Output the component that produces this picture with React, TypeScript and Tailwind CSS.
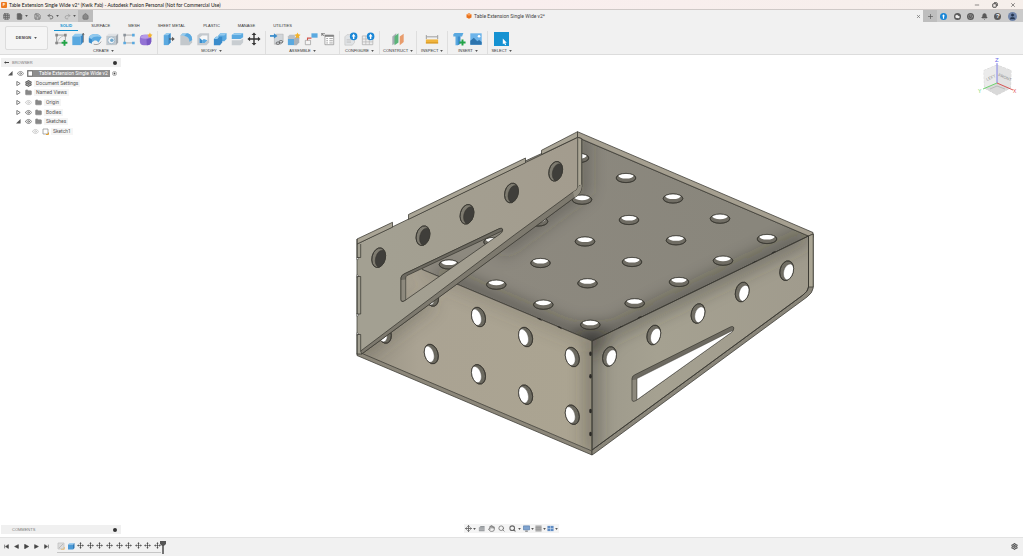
import React from "react";
import {
  Bell,
  Cloud,
  Clock,
  Eye,
  Folder,
  Grid3x3,
  Hand,
  House,
  Minus,
  Move,
  Plus,
  Redo2,
  Save,
  Search,
  Settings,
  Undo2,
  User,
  X,
  File as FileIcon,
} from "lucide-react";

type P = { x: number; y: number };
const pt = (x: number, y: number): P => ({ x, y });

/* ---------- ribbon icons, drawn on a 16 x 16 grid ---------- */

const blue = "#5aa9e0";
const lightBlue = "#93caee";
const deepBlue = "#3a8ccb";
const grey = "#8b939b";

const glyphs: Record<string, React.ReactNode> = {
  sketch: (
    <>
      <path d="M3 2.5V14M1.5 12.5H9M3 3.5H13V9" fill="none" stroke="#888" strokeWidth=".9" />
      <path d="M4 12Q5 6 12 4" fill="none" stroke="#aaa" strokeWidth=".8" />
      <path d="M1.5 2h3v3h-3zM11.5 2h3v3h-3zM1.5 11h3v3h-3z" fill="#888" />
      <path d="M12 9v6.6M8.7 12.3h6.6" stroke="#22a447" strokeWidth="2.2" />
    </>
  ),
  box: (
    <>
      <path d="M1.5 5 4.5 2H14L11 5z" fill={lightBlue} />
      <path d="M1.5 5H11V15H1.5z" fill={blue} />
      <path d="M11 5 14 2V11.5L11 15z" fill={deepBlue} />
      <path d="M14 12V1.5M13 3.500l1-2 1 2" stroke="#555" strokeWidth=".8" fill="none" />
    </>
  ),
  revolve: (
    <>
      <path d="M1 6C4 1 12 1 15.5 6L12 12C10 9 7 9 5 11.5L1 11z" fill={blue} />
      <path d="M1 6C4 1 12 1 15.5 6 11 4.5 6 5 4 8z" fill={lightBlue} />
      <path d="M1 7 4.500 8.500V13.500L1 12z" fill={deepBlue} />
      <path d="M6.500 14C10 15 13.500 14 15 11" fill="none" stroke="#999" />
    </>
  ),
  hole: (
    <>
      <path d="M1.500 4.500 4 2H15L12.500 4.500z" fill="#dfe2e5" />
      <path d="M1.500 4.500h11V15h-11z" fill="#c3c8cc" />
      <path d="M12.500 4.500 15 2V12L12.500 15z" fill="#a1a8af" />
      <circle cx="7.200" cy="9.500" r="4" fill="#f1f3f5" stroke="#9bb6c9" />
      <circle cx="7.800" cy="9.500" r="2" fill="#6fa9cf" />
    </>
  ),
  pattern: (
    <>
      <path d="M3 3.500H13M3 3.500V12.500H13" fill="none" stroke="#999" strokeWidth=".9" />
      <path d="M1.500 2h3v3h-3z" fill={grey} />
      <path d="M11.500 2h3v3h-3zM1.500 11h3v3h-3zM11.500 11h3v3h-3z" fill={blue} />
    </>
  ),
  form: (
    <>
      <rect x="1" y="3" width="13" height="12" rx="4.500" fill="#9272d4" />
      <path d="M1.500 6.500Q3 3 7 3H10Q13 3.500 13.500 6 8 9 1.500 6.500z" fill="#b79be8" />
      <path d="M8.500 8.500 14 6.500V11Q13 15 9 15z" fill="#7a58c2" />
      <path d="m12.500.5.9 2 2.100.5-1.600 1.500.4 2.200-1.800-1.100-1.900 1.100.4-2.200L9.500 3l2.100-.5z" fill="#f3b229" />
    </>
  ),
  press: (
    <>
      <path d="M2 3.500 5 1h5L7 3.500z" fill={lightBlue} />
      <path d="M2 3.500H7V15H2z" fill={blue} />
      <path d="M7 3.500 10 1V12L7 15z" fill={deepBlue} />
      <path d="M8 8h4" stroke="#555" strokeWidth="1.200" />
      <path d="M11.500 5.500 14.500 8 11.500 10.500z" fill="#555" />
    </>
  ),
  fillet: (
    <>
      <path d="M1.500 4 4 1.500H9C13 2 15 5 15 9V12L12 15H1.500z" fill="#c3c8cc" />
      <path d="M4 1.500H9C13 2 15 5 15 9L12 11C12 7 8 4 1.500 4z" fill={lightBlue} />
      <path d="M9 1.500C13 2 15 5 15 9L12 11C12 7 10 5 6 4.300z" fill={blue} />
    </>
  ),
  shell: (
    <>
      <path d="M1.500 4 4.500 1.500H15V12L12 15H1.500z" fill="#c4c9ce" />
      <path d="M4 6.500 7 4H13V9.500L10 12.500H4z" fill="#f7f8f9" />
      <path d="M4 6.500 7 9.500V12.500H4z" fill={deepBlue} />
      <path d="M7 9.500 9 8 13 9.500 10 12.500H7z" fill={blue} />
    </>
  ),
  combine: (
    <>
      <path d="M6 4 8.500 1.500H15.500V8L13 10.500H6z" fill={blue} />
      <path d="M1 8 3.500 5.500H10.500V12L8 15H1z" fill={deepBlue} />
      <path d="M6 4 8.500 1.500H15.500L13 4zM1 8 3.500 5.500H7L5 8z" fill={lightBlue} />
    </>
  ),
  split: (
    <>
      <path d="M2 3.500 5 1.500H15V6L12 8H2z" fill={blue} />
      <path d="M2 3.500 5 1.500H15L12 3.500z" fill={lightBlue} />
      <path d="M2 9.500H12L15 7.500V12L12 15H2z" fill="#c8cdd1" />
    </>
  ),
  move: (
    <path
      d="M8 .5 10.700 3.500H8.800V7.200H12.500V5.300L15.500 8 12.500 10.700V8.800H8.800V12.500H10.700L8 15.500 5.300 12.500H7.200V8.800H3.500V10.700L.5 8 3.500 5.300V7.200H7.200V3.500H5.300z"
      fill="#333"
    />
  ),
  component: (
    <>
      <path d="M5 4.500 7 2.500h8V11l-2.500 3H5z" fill="#d1d5d9" stroke="#aaa" strokeWidth=".6" />
      <path d="M0 4.500H5" stroke={deepBlue} strokeWidth="2" />
      <path d="M4.500 1.500 8.500 4.500 4.500 7.500z" fill={deepBlue} />
      <rect x="7" y="11.500" width="4" height="2.600" rx="1.300" fill="none" stroke="#555" strokeWidth=".9" />
      <rect x="10.500" y="9.800" width="4" height="2.600" rx="1.300" fill="none" stroke="#555" strokeWidth=".9" />
    </>
  ),
  assemblyNew: (
    <>
      <path d="M1 8H8V15H1z" fill={blue} />
      <path d="M1 8V5L3 3H9V8z" fill="#b9bfc5" />
      <path d="M8 8 10 5.500H14V12L11 15H8z" fill="#aab1b8" />
      <path d="m12 .5 1 2.200 2.500.5-1.800 1.700.4 2.500L12 6.200 9.900 7.400l.4-2.500L8.500 3.200 11 2.700z" fill="#f3b229" />
    </>
  ),
  joint: (
    <>
      <path d="M8.500 1.500h7v5h-7z" fill={blue} />
      <path d="M1.500 9.500h6v5h-6z" fill="#f4f4f4" stroke="#999" strokeWidth=".8" />
      <path d="M4 9.500V7H8.500" fill="none" stroke="#d0534a" strokeWidth="1.200" />
    </>
  ),
  table: (
    <>
      <path d="M4.500 3.500H14.500V14.500H4.500z" fill="#fff" stroke="#888" strokeWidth=".8" />
      <path d="M4.500 4.500H14.500" stroke="#777" strokeWidth="1.800" />
      <path d="M6 7.500h2M9.500 7.500h4M6 10h2M9.500 10h4M6 12.500h2M9.500 12.500h4" stroke="#999" strokeWidth="1" />
      <path d="M.5 2H4.500M1 1.500V4.500M1 2l2.500 2.500" stroke="#666" strokeWidth=".9" />
    </>
  ),
  config: (
    <>
      <path d="M1 5.500 3.500 3H12V12L9.500 15H1z" fill="#e0e3e6" stroke="#bbb" strokeWidth=".6" />
      <path d="M3 9h5M3 11.500h5" stroke="#bbb" />
      <circle cx="11" cy="5" r="4.300" fill="#1b87d6" />
      <path d="M11 2 13.200 5H11.800V8H10.200V5H8.800z" fill="#fff" />
    </>
  ),
  configTable: (
    <>
      <path d="M1.500 4.500H13.500V14.500H1.500z" fill="#eee" stroke="#aaa" strokeWidth=".8" />
      <path d="M1.500 8H13.500M1.500 11.300H13.500M5.500 4.500V14.500M9.500 4.500V14.500" stroke="#b5b5b5" strokeWidth=".8" />
      <circle cx="11" cy="5" r="4.300" fill="#1b87d6" />
      <path d="M11 2 13.200 5H11.800V8H10.200V5H8.800z" fill="#fff" />
    </>
  ),
  plane: (
    <>
      <path d="M1.500 5 6 1.500V12L1.500 15z" fill="#a6adb3" />
      <path d="M4 5 8.500 1.500V12L4 15z" fill="#5bb47a" />
      <path d="M10 5 14.500 2V11.500L10 15z" fill="#e89c6c" />
    </>
  ),
  measure: (
    <>
      <path d="M1.500 3.500V8M14.500 3.500V8M2 5.500H14" stroke="#888" strokeWidth=".9" />
      <path d="M1 8.500H15V13H1z" fill="#f0b43c" />
      <path d="M1 12H15V13H1z" fill="#cc8c1c" />
    </>
  ),
  insert: (
    <>
      <path d="M1.500 2.500 3 1H13L11.500 5H9.500V13.500L6.500 15H4V5H1.500z" fill={blue} />
      <path d="M6.500 5H9.500V13.500L6.500 15z" fill={deepBlue} />
      <path d="M12 8.500v7M8.500 12h7" stroke="#22a447" strokeWidth="2.200" />
    </>
  ),
  picture: (
    <>
      <path d="M1.500 1.500h13v13h-13z" fill="#6db4ea" />
      <path d="M1.500 14.500V10L5.500 6.500 9.500 10.500 11.500 9 14.500 11.500V14.500z" fill="#2d74ae" />
      <circle cx="11.500" cy="4.800" r="1.500" fill="#fff" />
    </>
  ),
  select: (
    <>
      <path d="M0 0h16v16H0z" fill="#1592d2" />
      <path d="M9.500 7.500V14L11 12.800 12.200 15.200 13.300 14.700 12.200 12.400H14z" fill="#fff" />
    </>
  ),
};

function Glyph({ name }: { name: string }) {
  return (
    <svg viewBox="0 0 16 16" className="h-[14px] w-full" aria-hidden="true">
      {glyphs[name]}
    </svg>
  );
}

const groups = [
  { label: "CREATE", pad: "px-1", icons: ["sketch", "box", "revolve", "hole", "pattern", "form"] },
  { label: "MODIFY", pad: "px-1", icons: ["press", "fillet", "shell", "combine", "split", "move"] },
  { label: "ASSEMBLE", pad: "px-1", icons: ["component", "assemblyNew", "joint", "table"] },
  { label: "CONFIGURE", pad: "px-1", icons: ["config", "configTable"] },
  { label: "CONSTRUCT", pad: "px-[3px]", icons: ["plane"] },
  { label: "INSPECT", pad: "px-1", icons: ["measure"] },
  { label: "INSERT", pad: "px-1", icons: ["insert", "picture"] },
  { label: "SELECT", pad: "px-[3px]", icons: ["select"] },
];

const tabs = ["SOLID", "SURFACE", "MESH", "SHEET METAL", "PLASTIC", "MANAGE", "UTILITIES"];

function Caret() {
  return (
    <svg viewBox="0 0 4 3" className="h-[2px] w-[3px] shrink-0" aria-hidden="true">
      <path d="M0 0h4L2 3z" fill="#555" />
    </svg>
  );
}

function TitleBar() {
  return (
    <header className="flex h-[10px] shrink-0 items-center border-b border-[#cfc9c7] bg-gradient-to-r from-[#f8f1ea] via-[#f9eeee] to-[#f6efeb] pl-px pr-[7px]">
      <span className="flex h-[6px] w-[6px] items-center justify-center rounded-[1px] bg-[#ee7a1f] text-[4px] font-bold text-white">
        F
      </span>
      <h1 className="ml-[2px] whitespace-nowrap font-['Lato',sans-serif] text-[5px] leading-[8px] text-[#111]">
        Table Extension Single Wide v2* (Kwik Fab) - Autodesk Fusion Personal (Not for Commercial Use)
      </h1>
      <div className="ml-auto flex items-center gap-[12px] text-[#222]">
        <button aria-label="Minimize"><Minus size={6} /></button>
        <button aria-label="Restore">
          <svg viewBox="0 0 12 12" className="h-[6px] w-[6px]" fill="none" stroke="#222" strokeWidth="1.600">
            <rect x="1.500" y="3.500" width="7" height="7" rx="1" />
            <path d="M4 1.500h5a1.500 1.500 0 0 1 1.500 1.500v5" />
          </svg>
        </button>
        <button aria-label="Close"><X size={6} /></button>
      </div>
    </header>
  );
}

function DocumentBar() {
  return (
    <div className="flex h-[12px] shrink-0 items-stretch bg-[#f1f1f1] text-[#666]">
      <div className="flex w-[78px] items-center bg-[#d0d0d0] pl-[3px]">
        <button aria-label="Data panel"><Grid3x3 size={7} strokeWidth={3} /></button>
        <button aria-label="File" className="ml-[6px] flex items-center gap-[2px]">
          <FileIcon size={7} fill="#666" /><Caret />
        </button>
        <button aria-label="Save" className="ml-[6px]"><Save size={7} strokeWidth={2.5} /></button>
        <button aria-label="Undo" className="ml-[6px] flex items-center gap-[2px]">
          <Undo2 size={7} strokeWidth={3} /><Caret />
        </button>
        <button aria-label="Redo" className="ml-[5px] flex items-center gap-[2px] text-[#999]">
          <Redo2 size={7} strokeWidth={2.5} /><Caret />
        </button>
      </div>
      <button aria-label="Home" className="flex w-[15px] items-center justify-center bg-[#bcbcbc]">
        <House size={7} fill="#888" />
      </button>
      <div className="flex flex-1 items-center pr-[2px]">
        <div className="flex flex-1 items-center justify-center gap-[2px] pl-[2px]">
          <svg viewBox="0 0 12 12" className="h-[6px] w-[6px]" aria-hidden="true">
            <path d="M6 .5 11 3V9L6 11.500 1 9V3z" fill="#e9711c" />
            <path d="M6 .5 11 3 6 5.500 1 3z" fill="#f9a35c" />
          </svg>
          <span className="whitespace-nowrap font-['Roboto',sans-serif] text-[5px] leading-[8px] text-[#444]">
            Table Extension Single Wide v2*
          </span>
        </div>
        <button aria-label="Close document"><X size={5} strokeWidth={3} /></button>
      </div>
      <div className="flex w-[100px] items-center bg-[#cbcbcb] text-[#5a5a5a]">
        <button aria-label="New document" className="flex h-full w-[14px] items-center justify-center bg-[#bebebe]">
          <Plus size={7} strokeWidth={2.5} />
        </button>
        <div className="flex flex-1 items-center justify-between pl-[3px] pr-[6px]">
          <button aria-label="Extensions">
            <svg viewBox="0 0 12 12" className="h-[7px] w-[7px]">
              <circle cx="6" cy="6" r="6" fill="#1b87d6" />
              <path d="M6 2 8.500 5.500H7V10H5V5.500H3.500z" fill="#fff" />
            </svg>
          </button>
          <button aria-label="Cloud status" className="rounded-full bg-[#5a5a5a] p-px"><Cloud size={5} color="#eee" fill="#eee" strokeWidth={1} /></button>
          <button aria-label="Job status" className="rounded-full bg-[#5a5a5a] p-px"><Clock size={5} color="#999" strokeWidth={3} /></button>
          <button aria-label="Notifications"><Bell size={7} fill="#5a5a5a" /></button>
          <button aria-label="Help" className="flex h-[7px] w-[7px] items-center justify-center rounded-full bg-[#5a5a5a] text-[6px] font-bold leading-[7px] text-white">
            ?
          </button>
          <button aria-label="Account" className="flex h-[9px] w-[9px] items-center justify-center rounded-full bg-[#7186ab]">
            <User size={7} color="#25364f" fill="#25364f" />
          </button>
        </div>
      </div>
    </div>
  );
}

function Ribbon() {
  return (
    <div className="flex h-[33px] shrink-0 border-b border-[#dcdcdc] bg-[#f1f1f1]">
      <button className="ml-[5px] mt-[4px] flex h-[24px] w-[43px] items-center justify-center gap-[3px] rounded-[2px] border border-[#dcdcdc] bg-[#f5f5f5] text-[4px] font-bold leading-[6px] text-[#444]">
        DESIGN <Caret />
      </button>
      <div className="ml-[2px] flex flex-col">
        <nav className="ml-[4px] flex h-[9px] items-stretch gap-[6px]">
          {tabs.map((t, i) => (
            <button
              key={t}
              className={
                i === 0
                  ? "mr-px border-b border-[#1592d2] px-[6px] text-[4px] font-bold leading-[8px] text-[#1592d2]"
                  : "border-b border-transparent px-[6px] text-[4px] leading-[8px] text-[#333]"
              }
            >
              {t}
            </button>
          ))}
        </nav>
        <div className="flex">
          {groups.map((g, i) => (
            <div key={g.label} className={i < groups.length - 1 ? "border-r border-[#dedede]" : ""}>
              <div className={"flex flex-col items-center pt-px " + g.pad}>
                <div className="flex gap-[3px]">
                  {g.icons.map((n) => (
                    <button key={n} aria-label={n} className={n === "select" ? "w-[15px] bg-[#1592d2]" : "w-[14px]"}>
                      <Glyph name={n} />
                    </button>
                  ))}
                </div>
                <button className="mt-px flex items-center gap-[2px] text-[4px] leading-[7px] text-[#333]">
                  {g.label} <Caret />
                </button>
              </div>
            </div>
          ))}
        </div>
      </div>
    </div>
  );
}

/* ---------- browser tree ---------- */

type Node = { label: string; indent: string; open?: boolean; leaf?: boolean; eye?: "on" | "off"; icon: "gear" | "folder" | "sketch" };

const nodes: Node[] = [
  { label: "Document Settings", indent: "pl-[15px]", icon: "gear" },
  { label: "Named Views", indent: "pl-[15px]", icon: "folder" },
  { label: "Origin", indent: "pl-[15px]", eye: "off", icon: "folder" },
  { label: "Bodies", indent: "pl-[15px]", eye: "on", icon: "folder" },
  { label: "Sketches", indent: "pl-[15px]", open: true, eye: "on", icon: "folder" },
  { label: "Sketch1", indent: "pl-[31px]", leaf: true, eye: "off", icon: "sketch" },
];

function Twisty({ open }: { open?: boolean }) {
  return (
    <svg viewBox="0 0 6 6" className="h-[5px] w-[5px] shrink-0" aria-hidden="true">
      {open ? <path d="M5.500 0V5.500H0z" fill="#555" /> : <path d="M1 .5 5 3 1 5.500z" fill="#fff" stroke="#555" strokeWidth=".9" />}
    </svg>
  );
}

function BrowserPanel() {
  return (
    <aside className="absolute left-px top-[3px] w-[120px]">
      <div className="flex h-[9px] items-center bg-[#f0f0f0] pl-[3px] pr-[4px] text-[4px] leading-[8px] text-[#777]">
        <svg viewBox="0 0 8 4" className="h-[3px] w-[5px]"><path d="M0 2 3 0V1.200H8V2.800H3V4z" fill="#444" /></svg>
        <span className="ml-[3px]">BROWSER</span>
        <button aria-label="Panel options" className="ml-auto h-[4px] w-[4px] rounded-full bg-[#333]" />
      </div>
      <ul className="mt-[2px] grid h-[67px] auto-rows-fr font-['Roboto',sans-serif] text-[5px] leading-[7px] text-[#555]">
        <li className="flex items-center pl-[7px]">
          <Twisty open />
          <Eye size={7} className="ml-[4px] text-[#777]" strokeWidth={2.500} />
          <span className="ml-[3px] flex h-[7px] w-[83px] items-center bg-[#8d8d8d] text-white">
            <svg viewBox="0 0 7 7" className="h-[7px] w-[7px]"><path d="M1 1h4.500v5H1z" fill="#fff" stroke="#666" strokeWidth=".7" /></svg>
            <span className="ml-[5px] whitespace-nowrap">Table Extension Single Wide v2</span>
          </span>
          <svg viewBox="0 0 6 6" className="ml-[2px] h-[5px] w-[5px]">
            <circle cx="3" cy="3" r="2.500" fill="#fff" stroke="#666" strokeWidth=".6" />
            <circle cx="3" cy="3" r="1.100" fill="#444" />
          </svg>
        </li>
        {nodes.map((n) => (
          <li key={n.label} className={"flex items-center " + n.indent}>
            {!n.leaf && <span className="mr-[4px] flex"><Twisty open={n.open} /></span>}
            {n.eye && <Eye size={7} strokeWidth={2.500} className={n.eye === "on" ? "mr-[3px] text-[#666]" : "mr-[3px] text-[#c0c0c0]"} />}
            {n.icon === "gear" && <Settings size={7} strokeWidth={4} className="text-[#666]" />}
            {n.icon === "folder" && <Folder size={7} fill="#888" className="text-[#888]" />}
            {n.icon === "sketch" && (
              <svg viewBox="0 0 7 7" className="h-[7px] w-[7px]">
                <path d="M1 1h5v5H1z" fill="#fff" stroke="#888" strokeWidth=".7" />
                <path d="M4 6.500h2.500V4.500" stroke="#e0a030" fill="none" />
              </svg>
            )}
            <span className="ml-[2px] bg-[#f5f5f5] px-[2px]">{n.label}</span>
          </li>
        ))}
      </ul>
    </aside>
  );
}

/* ---------- model ---------- */

const bedHoles: P[] = [
  pt(579, 158), pt(626, 178), pt(673, 198.500), pt(720, 218.700), pt(767, 239),
  pt(582, 199.700), pt(629, 220), pt(676, 240.300), pt(723, 260.700),
  pt(538, 221.500), pt(585, 241.500), pt(632, 262), pt(679, 282),
  pt(493.500, 242), pt(540.500, 263), pt(587.500, 283.300), pt(634.700, 303.300),
  pt(449, 264.500), pt(496.300, 284.700), pt(543.300, 304.700), pt(590.300, 324.800),
];
const frontHoles: P[] = [
  pt(431.500, 296.500), pt(478.500, 317), pt(525.600, 337), pt(572.300, 357),
  pt(384.300, 333.500), pt(431.300, 354), pt(478.500, 374.300), pt(525.600, 394.700), pt(572.300, 414.700),
];
const leftHoles: P[] = [pt(378.700, 257.700), pt(423, 235.700), pt(467, 214.300), pt(511.500, 193), pt(555.700, 171.300)];
const rightHoles: P[] = [pt(609.500, 356.500), pt(653.800, 335), pt(698, 313.500), pt(742.200, 292), pt(786.700, 270.700)];

const leftFace =
  "M357 244 577.700 137.300 581.700 138.500V186.500Q581 194 574.500 197.500L523.300 235 361.700 354 357 354Z";
const leftSlot = "M401 278Q401 275.500 404 274L498.500 229Q502.500 227.300 502.700 230Q502.800 232 500.500 233.700L405 300.500Q401 303 401 299.500Z";
const rightSlot = "M632 378.500Q632 376 635 374.700L730 327.200Q733.300 325.500 733.800 328Q734 330.500 731.500 332.200L636 400.500Q632 402.500 632 399.500Z";

function Model() {
  return (
    <svg
      viewBox="0 55 1023 482"
      className="absolute inset-0 h-full w-full"
      role="img"
      aria-label="Table extension model"
      fill="none"
      stroke="#3a3832"
      strokeWidth=".75"
      strokeLinejoin="round"
    >
      <defs>
        <linearGradient id="bed" gradientUnits="userSpaceOnUse" x1="500" y1="280" x2="740" y2="200">
          <stop offset="0" stopColor="#8d897f" />
          <stop offset="1" stopColor="#89867c" />
        </linearGradient>
        <linearGradient id="front" gradientUnits="userSpaceOnUse" x1="360" y1="0" x2="592" y2="0">
          <stop offset="0" stopColor="#979183" />
          <stop offset=".25" stopColor="#aaa393" />
          <stop offset="1" stopColor="#aba491" />
        </linearGradient>
        <linearGradient id="left" gradientUnits="userSpaceOnUse" x1="380" y1="230" x2="580" y2="200">
          <stop offset="0" stopColor="#a3a092" />
          <stop offset="1" stopColor="#a39c8e" />
        </linearGradient>
        <linearGradient id="right" gradientUnits="userSpaceOnUse" x1="592" y1="0" x2="809" y2="0">
          <stop offset="0" stopColor="#9d998b" />
          <stop offset=".3" stopColor="#a5a191" />
          <stop offset="1" stopColor="#a09b8d" />
        </linearGradient>
        <filter id="soft" filterUnits="userSpaceOnUse" x="340" y="100" width="500" height="380">
          <feGaussianBlur stdDeviation="9" />
        </filter>
        <clipPath id="bedClip"><path d="M577 137.300 808.500 236 592 341 421.700 269.300 440 200z" /></clipPath>
        <clipPath id="frontClip"><path d="M361 353.500 395 250 421.700 269.300 592 341V451z" /></clipPath>
        <clipPath id="rightClip"><path d="M592 341 808.500 236V287Q808 292 803 295L592 450z" /></clipPath>
        <clipPath id="flatHole"><ellipse rx="9.800" ry="4.600" /></clipPath>
        <clipPath id="tallHole"><ellipse rx="6.700" ry="10" /></clipPath>
      </defs>

      {/* bed */}
      <path d="M577 137.300 808.500 236 592 341 421.700 269.300 440 200z" fill="url(#bed)" />
      <g clipPath="url(#bedClip)" stroke="none">
        <g filter="url(#soft)">
          <path d="M440 275 592 341 808 236" stroke="#24231f" strokeWidth="9" opacity=".65" />
          <circle cx="592" cy="344" r="18" fill="#1e1d1a" opacity=".6" />
          <path d="M582 132V190L500 250" stroke="#2e2d29" strokeWidth="9" opacity=".55" />
        </g>
      </g>
      {bedHoles.map((h) => (
        <g key={h.x + "-" + h.y} transform={`translate(${h.x} ${h.y})`}>
          <ellipse rx="9.800" ry="4.600" fill="#706d64" />
          <g clipPath="url(#flatHole)">
            <ellipse cy="-2.400" rx="7.800" ry="2.900" fill="#fff" stroke="none" />
          </g>
          <ellipse rx="9.800" ry="4.600" />
        </g>
      ))}

      {/* rear rim */}
      <path d="M577.500 131.700 813 232.500V237.500L808.500 236 577.500 137.300z" fill="#a59f90" />

      {/* front panel */}
      <path d="M361 353.500 395 250 421.700 269.300 592 341V451z" fill="url(#front)" stroke="none" />
      <g clipPath="url(#frontClip)" stroke="none">
        <g filter="url(#soft)">
          <path d="M593 335V455" stroke="#3b3931" strokeWidth="9" opacity=".65" />
          <path d="M421 268 592 339" stroke="#57544a" strokeWidth="7" opacity=".5" />
          <path d="M357 354 430 300" stroke="#4c493f" strokeWidth="12" opacity=".45" />
        </g>
      </g>
      <path d="M421.700 269.300 592 341" />
      {frontHoles.map((h) => (
        <g key={h.x + "-" + h.y} transform={`translate(${h.x} ${h.y}) rotate(-17)`}>
          <ellipse rx="6.700" ry="10" fill="#6b695f" />
          <g clipPath="url(#tallHole)">
            <ellipse cx="-2.600" cy="-.5" rx="5.200" ry="8.400" fill="#fff" stroke="#55534d" strokeWidth=".4" />
          </g>
          <ellipse rx="6.700" ry="10" />
        </g>
      ))}
      <path d="M357 353.500 361.700 353.300 592 451V455L357 355.500z" fill="#8c877a" />

      {/* left panel */}
      <path fillRule="evenodd" d={leftFace + leftSlot} fill="url(#left)" />
      <path
        d="M357 239 392.500 222.300V227.200L357 244zM408.500 214.500 525.500 158V162.800L408.500 219.300zM541.500 150.300 577.500 131.700V137.300L541.500 154.500z"
        fill="#aaa596"
      />
      <path d="M577.700 137.300 581.700 138.700V186.500L577.700 187.500z" fill="#aaa594" />
      <path
        d="M577.700 187.500Q577.500 190 573 192L514.300 235 360.700 351 361.700 354 523.300 235.500 574.500 197.500Q581 194 581.700 186.500L580 185z"
        fill="#7d796e"
      />
      <path d="M577.700 187.500 578 186.500 581.700 184.500V187Q581 194 574.500 197.500L573 192Q577.500 190 577.700 187.500z" fill="#949083" stroke="none" />
      <path d="M357 257 359 258.500 357 260zM357 274.500 359 276 357 277.500zM357 313 359 315 357 316.500zM357 332.500 359 334 357 335.500z" fill="#fff" stroke="#3a3832" strokeWidth=".5" />
      <path d="M357 239V257.500M357 276.500V314M357 334.500V354.500M360.700 244V257.500H357M360.700 276.500V314H357M360.700 334.500V351M357 276.500H360.700M357 334.500H360.700" />
      <path
        d="M401 278Q401 275.500 404 274L498.500 229Q502.500 227.300 502.700 230 502.500 231 500.500 231.700L407 275.500Q405.700 276.500 405.700 278V299.800Q401 303 401 299.500z"
        fill="#6d6a61"
      />
      <path d="M401.500 280V299.500Q401.500 302 405.300 299.800V279.500z" fill="#8d897d" stroke="none" />
      {leftHoles.map((h) => (
        <g key={h.x} transform={`translate(${h.x} ${h.y}) rotate(14)`}>
          <ellipse rx="6.700" ry="10" fill="#7e7b70" />
          <g clipPath="url(#tallHole)">
            <ellipse cx="2.600" cy=".5" rx="5.600" ry="8.800" fill="#3f3e3a" strokeWidth=".5" />
          </g>
          <ellipse rx="6.700" ry="10" />
        </g>
      ))}

      {/* right panel */}
      <path d="M808.500 236 813.200 234V288Q812.500 293 807 297L595 453 592 455V450L803 295Q808.500 291 808.500 287z" fill="#8a867a" />
      <path d="M808.500 236 813.200 234V287L808.500 287z" fill="#aaa594" />
      <path d="M592 341 808.500 236V287Q808 291.500 803 295L592 450z" fill="url(#right)" />
      <g clipPath="url(#rightClip)" stroke="none">
        <g filter="url(#soft)">
          <path d="M591 455V341L808 235" stroke="#33322c" strokeWidth="9" opacity=".7" />
          <circle cx="592" cy="341" r="14" fill="#33322c" opacity=".55" />
        </g>
      </g>
      <path d="M592 341 808.500 236V287Q808 291.500 803 295L592 450z" />
      {rightHoles.map((h) => (
        <g key={h.x} transform={`translate(${h.x} ${h.y}) rotate(14)`}>
          <ellipse rx="6.700" ry="10" fill="#716e64" />
          <g clipPath="url(#tallHole)">
            <ellipse cx="2.400" cy=".8" rx="5.200" ry="8.200" fill="#fff" stroke="#45433e" strokeWidth=".4" />
          </g>
          <ellipse rx="6.700" ry="10" />
        </g>
      ))}
      <path d={rightSlot} fill="#6d6a61" />
      <path d="M632.500 380V399.500Q632.500 402 636.500 399.800V379.500z" fill="#8d897d" stroke="none" />
      <path d="M637 378.500 732.500 330.500 732 332 637 399.800z" fill="#fff" strokeWidth=".5" />

      {/* joint notches */}
      <g fill="#2b2a26" stroke="none">
        {[353.700, 376.300, 411, 434].map((y) => (
          <ellipse key={y} cx="590.500" cy={y} rx="1.300" ry="2.300" />
        ))}
        <path d="M618 328.500q2-3 5-2.500zM637 319q2-3.500 5-2.500zM752 263.500q2-3 5-2.500zM771 254q2-3.500 5-2.500zM537 318.500q3-2 5 2.500zM557 326.800q3-2 5 2.500z" />
      </g>
    </svg>
  );
}

function ViewCube() {
  return (
    <svg viewBox="0 0 44 44" className="absolute right-[3px] top-0 h-[44px] w-[44px]" role="img" aria-label="View cube" fontFamily="Liberation Sans, sans-serif">
      <path d="M21 10 8 15.500 8.500 33 21 40 34.500 33 35 15.500z" fill="#e6e6e6" stroke="#bbb" strokeWidth=".6" strokeDasharray="3 1" />
      <path d="M21 10 8 15.500 8.500 33 21 28z" fill="#ebebeb" />
      <path d="M21 10 35 15.500 34.500 33 21 28z" fill="#e2e2e2" />
      <path d="M21 28 8.500 33 21 40 34.500 33z" fill="#d9d9d9" />
      <text x="11" y="26" fontSize="4" fill="#888" transform="rotate(-24 11 26)">LEFT</text>
      <text x="22" y="21" fontSize="4" fill="#888" transform="rotate(22 22 21)">FRONT</text>
      <path d="M14 34 21 31 29 34" stroke="#bbb" strokeWidth="1" fill="none" />
      <path d="M21 28V8" stroke="#7777e8" strokeWidth=".9" />
      <path d="M21 28 7 34" stroke="#63d463" strokeWidth=".9" />
      <path d="M21 28 37 35" stroke="#d64545" strokeWidth=".9" />
      <text x="19" y="7" fontSize="6" fill="#6c6ce8">Z</text>
      <text x="37" y="38" fontSize="5" fill="#e05050">X</text>
      <text x="2" y="38" fontSize="5" fill="#63d463">Y</text>
    </svg>
  );
}

function NavBar() {
  return (
    <div className="absolute inset-x-0 bottom-[4px] flex justify-center">
      <div className="flex h-[9px] items-center bg-[#f4f4f4] px-px text-[#666]">
        <button aria-label="Orbit" className="flex items-center gap-px"><Move size={7} strokeWidth={3} /><Caret /></button>
        <button aria-label="Look at" className="ml-[2px]">
          <svg viewBox="0 0 8 8" className="h-[7px] w-[7px]"><path d="M1 3 3 1H7.500V7H1z" fill="#92969a" /><path d="M1 3.500H7.500M1 5.500H7.500" stroke="#ddd" strokeWidth=".6" /></svg>
        </button>
        <button aria-label="Pan" className="ml-[3px]"><Hand size={7} strokeWidth={2.500} /></button>
        <button aria-label="Zoom" className="ml-[3px]"><Search size={7} strokeWidth={2.500} /></button>
        <button aria-label="Zoom window" className="ml-[4px] flex items-center gap-[2px]"><Search size={7} strokeWidth={3.500} /><Caret /></button>
        <button aria-label="Display settings" className="ml-[2px] flex items-center gap-px">
          <svg viewBox="0 0 8 8" className="h-[7px] w-[7px]"><path d="M.5 1h7v4.500h-7z" fill="#7fa3cf" stroke="#5a7fae" strokeWidth=".8" /><path d="M2.500 7h3" stroke="#555" /></svg><Caret />
        </button>
        <button aria-label="Grid" className="ml-px flex items-center gap-px">
          <svg viewBox="0 0 8 8" className="h-[7px] w-[7px]"><path d="M.5.5h7v7h-7z" fill="#aaa" /><path d="M.5 3h7M.5 5h7" stroke="#888" strokeWidth=".5" /></svg><Caret />
        </button>
        <button aria-label="Viewports" className="ml-px flex items-center gap-px">
          <svg viewBox="0 0 8 8" className="h-[7px] w-[7px]"><path d="M.5 1h7v6h-7z" fill="#5f8cc4" /><path d="M4 1v6M.5 4h7" stroke="#dce8f5" strokeWidth=".6" /></svg><Caret />
        </button>
      </div>
    </div>
  );
}

function Timeline() {
  const play = [
    ["Go to start", "M1 1V7M7 1 2.500 4 7 7z"],
    ["Step back", "M7 1 1 4 7 7z"],
    ["Play", "M1 .5 7.500 4 1 7.500z"],
    ["Step forward", "M1 1 7 4 1 7z"],
    ["Go to end", "M7 1V7M1 1 5.500 4 1 7z"],
  ];
  return (
    <footer className="flex h-[19px] shrink-0 items-center border-t border-[#e2e2e2] bg-[#f1f1f1] pl-[4px] pr-[5px]">
      <div className="flex gap-[5px] pb-[2px]">
        {play.map(([label, d]) => (
          <button key={label} aria-label={label} className="flex">
            <svg viewBox="0 0 8 8" className="h-[5px] w-[5px]"><path d={d} fill="#444" stroke="#444" strokeWidth="1" /></svg>
          </button>
        ))}
      </div>
      <div className="ml-[8px] flex h-[13px] items-start">
        <div className="flex h-[12px] items-center gap-[2px] border-b border-[#c6c6c6] pb-px">
          <button aria-label="Sketch feature">
            <svg viewBox="0 0 8 8" className="h-[8px] w-[8px]"><path d="M1 1h6v6H1z" fill="#ddd" stroke="#bbb" strokeWidth=".7" /><path d="M2 6 6 2" stroke="#aaa" strokeWidth=".7" /><path d="M4 7.300h3.300V5" fill="none" stroke="#e8bd77" strokeWidth=".9" /></svg>
          </button>
          <button aria-label="Extrude feature">
            <svg viewBox="0 0 8 8" className="h-[8px] w-[8px]"><path d="M1 2.500 2.500 1H7.500L6 2.500z" fill="#9dcdf0" /><path d="M1 2.500H6V7.500H1z" fill="#4c9ad6" /><path d="M6 2.500 7.500 1V6L6 7.500z" fill="#2f78b5" /></svg>
          </button>
          <div className="flex w-[84px] justify-between">
            {Array.from({ length: 9 }, (_, i) => (
              <button key={i} aria-label={"Move " + (i + 1)} className="w-[7px]"><svg viewBox="0 0 16 16" className="h-[7px] w-[7px]">{glyphs.move}</svg></button>
            ))}
          </div>
        </div>
        <svg viewBox="0 0 6 13" className="-ml-px h-[13px] w-[6px]" aria-hidden="true"><path d="M0 0H6V3L3.800 5V13H2.200V5L0 3z" fill="#555" /></svg>
      </div>
      <button aria-label="Timeline settings" className="ml-auto flex pb-[2px] text-[#555]"><Settings size={7} strokeWidth={3.500} /></button>
    </footer>
  );
}

export default function App() {
  return (
    <div className="flex h-screen flex-col overflow-hidden bg-white font-['Liberation_Sans',sans-serif]">
      <TitleBar />
      <DocumentBar />
      <Ribbon />
      <main className="relative flex-1 overflow-hidden bg-white">
        <Model />
        <BrowserPanel />
        <ViewCube />
        <div className="absolute bottom-[3px] left-px flex h-[9px] w-[120px] items-center bg-[#f0f0f0] pl-[11px] pr-[4px] text-[4px] leading-[8px] text-[#777]">
          COMMENTS
          <button aria-label="Comment options" className="ml-auto h-[4px] w-[4px] rounded-full bg-[#333]" />
        </div>
        <NavBar />
      </main>
      <Timeline />
    </div>
  );
}
